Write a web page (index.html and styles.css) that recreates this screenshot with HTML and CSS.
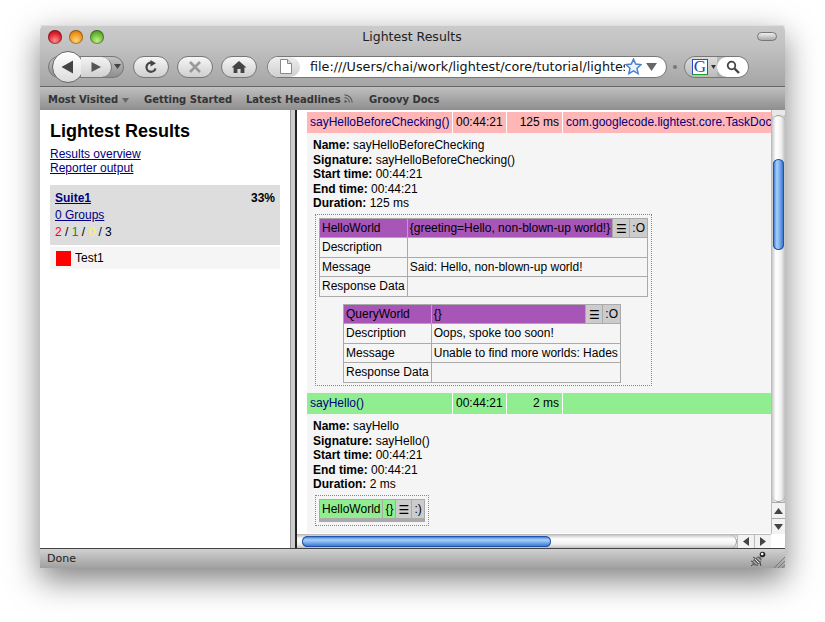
FILE: index.html
```html
<!DOCTYPE html>
<html lang="en">
<head>
    <meta charset="UTF-8">
    <title>Lightest Results</title>
    <link rel="stylesheet" href="styles.css">
</head>
<body>
<div class="window">
    <div class="chrome">
        <div class="titlebar">
            <span class="light red"></span>
            <span class="light orange"></span>
            <span class="light green"></span>
            <span class="title">Lightest Results</span>
            <span class="zoom-pill"></span>
        </div>
        <div class="toolbar">
            <div class="nav">
                <span class="back">
                    <svg width="18" height="18" viewBox="0 0 18 18"><path d="M14 2.5V15.5L2.5 9Z" fill="#444"/></svg>
                </span>
                <span class="forward">
                    <svg width="14" height="14" viewBox="0 0 14 14"><path d="M2.5 2V12L12 7Z" fill="#555"/></svg>
                </span>
                <span class="history">
                    <svg width="7" height="5" viewBox="0 0 7 5"><path d="M0 0H7L3.5 5Z" fill="#444"/></svg>
                </span>
            </div>
            <span class="pill">
                <svg width="14" height="14" viewBox="0 0 14 14"><path d="M11.5 8.5A4.6 4.6 0 1 1 7.5 2.6" fill="none" stroke="#444" stroke-width="2.2"/><path d="M6.5 0V6.4L12 3.2Z" fill="#444"/></svg>
            </span>
            <span class="pill">
                <svg width="14" height="14" viewBox="0 0 14 14"><path d="M2 2L12 12M12 2L2 12" stroke="#999" stroke-width="2.6"/></svg>
            </span>
            <span class="pill">
                <svg width="16" height="14" viewBox="0 0 16 14"><path d="M8 1L15.5 7.5H13.4V13H9.6V9H6.4V13H2.6V7.5H.5Z" fill="#444"/></svg>
            </span>
            <div class="urlbar">
                <span class="page-cap">
                    <svg width="12" height="15" viewBox="0 0 12 15"><path d="M.5.5H7.5L11.5 4.5V14.5H.5Z" fill="#fff" stroke="#888"/><path d="M7.5.5V4.5H11.5" fill="#ddd" stroke="#888"/></svg>
                </span>
                <span class="url">file:///Users/chai/work/lightest/core/tutorial/lightest</span>
                <svg class="star" width="17" height="17" viewBox="0 0 17 17"><path d="M8.5 1.2L10.7 6.1L16 6.7L12 10.3L13.1 15.6L8.5 12.9L3.9 15.6L5 10.3L1 6.7L6.3 6.1Z" fill="#eef4fc" stroke="#4a80d0" stroke-width="1.5"/></svg>
                <svg class="url-drop" width="11" height="8" viewBox="0 0 11 8"><path d="M0 0H11L5.5 8Z" fill="#666"/></svg>
            </div>
            <span class="grip"></span>
            <div class="searchbar">
                <span class="engine">
                    <span class="g-box">G</span>
                    <svg width="5" height="4" viewBox="0 0 5 4"><path d="M0 0H5L2.5 4Z" fill="#333"/></svg>
                </span>
                <span class="search-cap">
                    <svg width="14" height="14" viewBox="0 0 14 14"><circle cx="5.5" cy="5.5" r="3.8" fill="none" stroke="#444" stroke-width="1.8"/><path d="M8.5 8.5L13 13" stroke="#444" stroke-width="2.4"/></svg>
                </span>
            </div>
        </div>
        <div class="bookmarks">
            <span class="mark first">Most Visited <svg width="7" height="5" viewBox="0 0 7 5"><path d="M0 0H7L3.5 5Z" fill="#666"/></svg></span>
            <span class="mark second">Getting Started</span>
            <span class="mark third">Latest Headlines <svg width="9" height="9" viewBox="0 0 9 9"><circle cx="1.5" cy="7.5" r="1.2" fill="#555"/><path d="M.5 3.6A5 5 0 0 1 5.4 8.5M.5 .8A7.8 7.8 0 0 1 8.2 8.5" fill="none" stroke="#555" stroke-width="1.2"/></svg></span>
            <span class="mark">Groovy Docs</span>
        </div>
    </div>

    <div class="frames">
        <div class="left-frame">
            <h1>Lightest Results</h1>
            <div class="nav-links">
                <a href="#">Results overview</a><br>
                <a href="#">Reporter output</a>
            </div>
            <div class="suite">
                <div class="suite-head"><a href="#"><b>Suite1</b></a><b>33%</b></div>
                <div class="suite-line"><a href="#">0 Groups</a></div>
                <div class="suite-line"><span class="c-red">2</span> / <span class="c-green">1</span> / <span class="c-yellow">0</span> / 3</div>
            </div>
            <div class="test-row"><span class="test-box"></span>Test1</div>
        </div>
        <div class="splitter"></div>
        <div class="right-frame">
            <div class="view">
                <div class="method failed">
                    <span class="m-name">sayHelloBeforeChecking()</span>
                    <span class="m-time">00:44:21</span>
                    <span class="m-dur">125 ms</span>
                    <span class="m-class">com.googlecode.lightest.core.TaskDocument</span>
                </div>
                <div class="detail">
                    <div class="props">
                        <b>Name:</b> sayHelloBeforeChecking<br>
                        <b>Signature:</b> sayHelloBeforeChecking()<br>
                        <b>Start time:</b> 00:44:21<br>
                        <b>End time:</b> 00:44:21<br>
                        <b>Duration:</b> 125 ms
                    </div>
                    <div class="tasks">
                        <table class="task">
                            <tr class="purple"><td class="col-name">HelloWorld</td><td>{greeting=Hello, non-blown-up world!}</td><td class="btn">☰</td><td class="btn">:O</td></tr>
                            <tr><td>Description</td><td colspan="3"></td></tr>
                            <tr><td>Message</td><td colspan="3">Said: Hello, non-blown-up world!</td></tr>
                            <tr><td>Response Data</td><td colspan="3"></td></tr>
                        </table>
                        <table class="task nested">
                            <tr class="purple"><td class="col-name">QueryWorld</td><td>{}</td><td class="btn">☰</td><td class="btn">:O</td></tr>
                            <tr><td>Description</td><td colspan="3">Oops, spoke too soon!</td></tr>
                            <tr><td>Message</td><td colspan="3">Unable to find more worlds: Hades</td></tr>
                            <tr><td>Response Data</td><td colspan="3"></td></tr>
                        </table>
                    </div>
                </div>
                <div class="method passed">
                    <span class="m-name">sayHello()</span>
                    <span class="m-time">00:44:21</span>
                    <span class="m-dur">2 ms</span>
                    <span class="m-class"></span>
                </div>
                <div class="detail">
                    <div class="props">
                        <b>Name:</b> sayHello<br>
                        <b>Signature:</b> sayHello()<br>
                        <b>Start time:</b> 00:44:21<br>
                        <b>End time:</b> 00:44:21<br>
                        <b>Duration:</b> 2 ms
                    </div>
                    <div class="tasks small">
                        <table class="task short">
                            <tr class="lime"><td>HelloWorld</td><td>{}</td><td class="btn">☰</td><td class="btn">:)</td></tr>
                        </table>
                    </div>
                </div>
            </div>
            <div class="vscroll">
                <span class="v-cap"></span>
                <span class="v-track"></span>
                <span class="v-thumb"></span>
                <span class="v-rest"></span>
                <span class="arrow-v">
                    <svg width="9" height="8" viewBox="0 0 9 8"><path d="M4.5 1L9 7H0Z" fill="#444"/></svg>
                </span>
                <span class="arrow-v">
                    <svg width="9" height="8" viewBox="0 0 9 8"><path d="M0 1H9L4.5 7Z" fill="#444"/></svg>
                </span>
            </div>
            <div class="hscroll">
                <span class="h-thumb"></span>
                <span class="h-rest"></span>
                <span class="arrow-h">
                    <svg width="8" height="9" viewBox="0 0 8 9"><path d="M7 0V9L1 4.5Z" fill="#444"/></svg>
                </span>
                <span class="arrow-h">
                    <svg width="8" height="9" viewBox="0 0 8 9"><path d="M1 0V9L7 4.5Z" fill="#444"/></svg>
                </span>
            </div>
            <div class="corner"></div>
        </div>
    </div>

    <div class="statusbar">
        <span>Done</span>
        <svg class="bug" width="16" height="16" viewBox="0 0 16 16">
            <path d="M1 10L4 11M3 6L6 8M7 15L8 12M11 15L10 11M1 15L4 13" stroke="#444" fill="none"/>
            <ellipse cx="7" cy="10" rx="3.6" ry="5.4" transform="rotate(45 7 10)" fill="#666"/>
            <path d="M3.5 10L7 13.5M5 8L9 12M7 6.5L10.5 10" stroke="#ddd"/>
            <circle cx="12.5" cy="3.5" r="2.8" fill="#222"/>
            <circle cx="12.2" cy="3" r="1.3" fill="#fff"/>
        </svg>
        <svg class="resize" width="12" height="12" viewBox="0 0 12 12"><path d="M1 12L12 1M5 12L12 5M9 12L12 9" stroke="#777" stroke-width="1"/></svg>
    </div>
</div>
</body>
</html>
```

FILE: styles.css
```css
body {
    margin: 0;
    padding: 25px 40px 0;
    height: 622px;
    box-sizing: border-box;
    background-color: #fff;
    overflow: hidden;
    font-family: "Liberation Sans", Arial, sans-serif;
    font-size: 12px;
    color: #000;
}

a {
    color: #000080;
}

.window {
    width: 745px;
    height: 543px;
    display: flex;
    flex-direction: column;
    border-radius: 5px 5px 0 0;
    box-shadow: 0 12px 32px rgba(0, 0, 0, 0.5);
}

/* window chrome */
.chrome {
    height: 85px;
    flex: none;
    border-radius: 5px 5px 0 0;
    background: linear-gradient(#cbcbcb, #c3c3c3 22%, #a5a5a5 72%, #a0a0a0);
    font-family: "DejaVu Sans", sans-serif;
}

.titlebar {
    height: 21px;
    display: flex;
    align-items: center;
    gap: 7px;
    padding: 0 8px 0 8px;
    border-top: 1px solid #dedede;
}

.light {
    width: 14px;
    height: 14px;
    border-radius: 50%;
    box-shadow: inset 0 0 0 1px rgba(0, 0, 0, 0.3);
}

.red {
    background: radial-gradient(circle at 50% 75%, #ff8d8d, #d81c2a 60%, #a01020);
}

.orange {
    background: radial-gradient(circle at 50% 75%, #ffd474, #ec8f18 60%, #b06410);
}

.green {
    background: radial-gradient(circle at 50% 75%, #bff08a, #63b02c 60%, #3f8018);
}

.title {
    flex: 1;
    text-align: center;
    font-size: 12.5px;
    color: #222;
    padding-right: 37px;
}

.zoom-pill {
    width: 18px;
    height: 7px;
    border: 1px solid #777;
    border-radius: 5px;
    background: linear-gradient(#eee, #aaa);
}

.toolbar {
    height: 40px;
    display: flex;
    align-items: center;
    gap: 8px;
    padding: 0 0 0 8px;
    border-bottom: 1px solid #666;
    box-sizing: border-box;
}

.nav {
    width: 76px;
    height: 22px;
    margin-right: 1px;
    display: flex;
    align-items: center;
    border: 1px solid #777;
    border-radius: 11px;
    background: linear-gradient(#c4c4c4, #8e8e8e);
    flex: none;
    box-sizing: border-box;
}

.back {
    width: 32px;
    height: 32px;
    margin-left: 3px;
    flex: none;
    border: 1px solid #666;
    border-radius: 50%;
    background: linear-gradient(#fff, #dcdcdc);
    display: flex;
    align-items: center;
    justify-content: center;
    box-sizing: border-box;
}

.forward {
    width: 30px;
    height: 20px;
    margin-left: -3px;
    flex: none;
    border-right: 1px solid #777;
    border-radius: 0 10px 10px 0;
    background: linear-gradient(#f4f4f4, #d0d0d0);
    display: flex;
    align-items: center;
    justify-content: center;
}

.history {
    flex: 1;
    display: flex;
    justify-content: center;
}

.pill {
    width: 36px;
    height: 22px;
    flex: none;
    box-sizing: border-box;
    border: 1px solid #777;
    border-radius: 11px;
    background: linear-gradient(#f6f6f6, #cfcfcf);
    display: flex;
    align-items: center;
    justify-content: center;
}

.urlbar {
    width: 400px;
    height: 22px;
    margin-left: 2px;
    flex: none;
    box-sizing: border-box;
    display: flex;
    align-items: center;
    border: 1px solid #777;
    border-radius: 11px;
    background: #fff;
    overflow: hidden;
}

.page-cap {
    width: 32px;
    height: 100%;
    flex: none;
    box-sizing: border-box;
    padding-left: 3px;
    background: linear-gradient(#eee, #cfcfcf);
    border-radius: 0 11px 11px 0;
    display: flex;
    align-items: center;
    justify-content: center;
}

.url {
    width: 325px;
    padding-left: 10px;
    flex: none;
    box-sizing: border-box;
    font-size: 12.75px;
    color: #111;
    white-space: nowrap;
    overflow: hidden;
}

.star {
    flex: none;
}

.url-drop {
    margin-left: 4px;
    flex: none;
}

.grip {
    width: 4px;
    height: 4px;
    margin-left: -2px;
    flex: none;
    border-radius: 50%;
    background-color: #777;
}

.searchbar {
    width: 65px;
    height: 22px;
    margin-left: -1px;
    flex: none;
    box-sizing: border-box;
    display: flex;
    border: 1px solid #777;
    border-radius: 11px;
    overflow: hidden;
}

.engine {
    width: 32px;
    display: flex;
    align-items: center;
    gap: 3px;
    padding-left: 7px;
    flex: none;
    box-sizing: border-box;
    background: linear-gradient(#ddd, #bbb);
}

.g-box {
    width: 14px;
    height: 14px;
    flex: none;
    border: 1px solid;
    border-color: #2050c0 #c02020 #20a020 #2050c0;
    background-color: #fff;
    color: #1a45c0;
    font: 17px/14px "Liberation Serif", serif;
    text-align: center;
}

.search-cap {
    flex: 1;
    border-radius: 11px 0 0 11px;
    background-color: #fff;
    display: flex;
    align-items: center;
    justify-content: center;
}

.bookmarks {
    height: 23px;
    display: flex;
    align-items: center;
    padding-left: 8px;
    border-top: 1px solid #c0c0c0;
    box-sizing: border-box;
    font-size: 10px;
    font-weight: bold;
    color: #333;
    background: linear-gradient(#bdbdbd, #8e8e8e);
}

.mark {
    white-space: nowrap;
}

.first {
    width: 96px;
}

.second {
    width: 102px;
}

.third {
    width: 123px;
}

/* frames */
.frames {
    flex: 1;
    display: flex;
    min-height: 0;
    background-color: #fff;
}

.left-frame {
    width: 250px;
    flex: none;
    box-sizing: border-box;
    padding: 11px 10px 0 10px;
}

h1 {
    font-size: 18px;
    line-height: 20px;
    margin: 0 0 6px;
}

.nav-links {
    line-height: 14px;
    margin-bottom: 10px;
}

.suite {
    height: 60px;
    box-sizing: border-box;
    padding: 5px 5px 0;
    background-color: #ddd;
    line-height: 17px;
}

.suite-head {
    display: flex;
    justify-content: space-between;
}

.c-red {
    color: #f00;
}

.c-green {
    color: #282;
}

.c-yellow {
    color: #ff0;
}

.test-row {
    height: 22px;
    margin-top: 2px;
    padding-left: 6px;
    display: flex;
    align-items: center;
    gap: 4px;
    background-color: #f5f5f5;
}

.test-box {
    width: 15px;
    height: 15px;
    background-color: #f00;
}

.splitter {
    width: 7px;
    flex: none;
    box-sizing: border-box;
    background-color: #ccc;
    border-left: 1px solid #999;
    border-right: 2px solid #222;
}

.right-frame {
    flex: 1;
    min-width: 0;
    display: grid;
    grid-template-columns: 1fr 14px;
    grid-template-rows: 1fr 14px;
}

.view {
    overflow: hidden;
    padding: 2px 0 0 10px;
}

.method {
    display: flex;
    gap: 1px;
    width: 600px;
    height: 21px;
    line-height: 21px;
    white-space: nowrap;
}

.method span {
    flex: none;
    box-sizing: border-box;
    padding: 0 3px;
    overflow: hidden;
}

.failed span {
    background-color: #ffb6b6;
}

.passed span {
    background-color: #90ee90;
}

.m-name {
    width: 145px;
    color: #000080;
}

.m-time {
    width: 53px;
}

.m-dur {
    width: 55px;
    text-align: right;
}

.method .m-class {
    width: 343px;
    color: #000080;
}

.detail {
    background-color: #f5f5f5;
    padding: 5px 6px 7.5px;
    width: 452px;
}

.props {
    line-height: 14.5px;
}

.tasks {
    width: 337px;
    height: 172px;
    box-sizing: border-box;
    margin: 3px 0 0 2px;
    padding: 3px;
    border: 1px dotted #888;
}

.small {
    width: 114px;
    height: 31px;
}

.task {
    border-collapse: collapse;
    white-space: nowrap;
    width: 329px;
}

.task td {
    border: 1px solid #aaa;
    padding: 2px;
    line-height: 14.5px;
}

.col-name {
    width: 82px;
}

.nested {
    width: 278px;
    margin: 7px 0 0 24px;
}

.short {
    width: auto;
    border-bottom: 4px solid #aaa;
}

.purple td {
    background-color: #a855b8;
}

.lime td {
    background-color: #90ee90;
}

.task .btn {
    width: 12px;
    background-color: #ccc;
    text-align: center;
    font-family: "Noto Sans CJK JP", "DejaVu Sans", sans-serif;
}

.task .btn:last-child {
    font-family: "Liberation Sans", sans-serif;
}

/* scrollbars */
.vscroll {
    display: flex;
    flex-direction: column;
    background: linear-gradient(90deg, #c8c8c8, #fff 30%, #f0f0f0 70%, #c0c0c0);
    border-left: 1px solid #bbb;
    box-sizing: border-box;
}

.v-cap {
    height: 5px;
    background-color: #e8e8e8;
}

.v-track {
    height: 44px;
    border-radius: 7px 7px 0 0;
    border-top: 1px solid #999;
    box-sizing: border-box;
}

.v-thumb {
    height: 91px;
    margin: 0 1px;
    border-radius: 6px;
    background: linear-gradient(90deg, #2a66c8, #a8d0f8 35%, #78aef0 60%, #2a66c8);
    box-shadow: inset 0 0 0 1px #1f52a8;
}

.v-rest {
    flex: 1;
    border-radius: 0 0 7px 7px;
    border-bottom: 1px solid #999;
}

.arrow-v {
    height: 15px;
    flex: none;
    display: flex;
    align-items: center;
    justify-content: center;
    background-color: #f2f2f2;
    border-top: 1px solid #aaa;
}

.hscroll {
    display: flex;
    align-items: stretch;
    padding-left: 5px;
    background: linear-gradient(#c8c8c8, #fff 30%, #f0f0f0 70%, #c0c0c0);
    border-top: 1px solid #bbb;
    box-sizing: border-box;
}

.h-thumb {
    width: 249px;
    flex: none;
    margin: 1px 0;
    border-radius: 6px;
    background: linear-gradient(#2a66c8, #a8d0f8 35%, #78aef0 60%, #2a66c8);
    box-shadow: inset 0 0 0 1px #1f52a8;
}

.h-rest {
    flex: 1;
    border-right: 1px solid #999;
    border-radius: 0 7px 7px 0;
}

.arrow-h {
    width: 16px;
    flex: none;
    display: flex;
    align-items: center;
    justify-content: center;
    background-color: #f2f2f2;
    border-left: 1px solid #bbb;
}

.corner {
    background-color: #fff;
}

/* status bar */
.statusbar {
    height: 20px;
    flex: none;
    display: flex;
    align-items: center;
    padding-left: 7px;
    border-top: 1px solid #444;
    box-sizing: border-box;
    background: linear-gradient(#d0d0d0, #a0a0a0);
    font: 11px "DejaVu Sans", sans-serif;
    color: #222;
}

.bug {
    margin-left: auto;
}

.resize {
    margin: 7px 0 0 7px;
    align-self: flex-start;
}
```
